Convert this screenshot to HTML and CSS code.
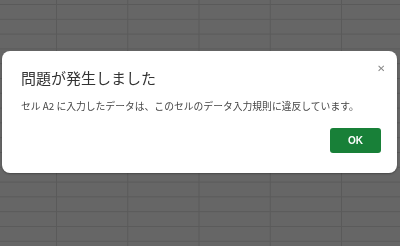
FILE: index.html
```html
<!DOCTYPE html>
<html>
  <head>
    <meta charset="UTF-8" />
    <title>問題が発生しました</title>
    <link rel="stylesheet" href="styles.css">
  </head>
  <body>
    <div class="sheet"></div>

    <div class="overlay">
      <div class="dialog">
        <div class="dialog-head">
          <h2 class="dialog-title">問題が発生しました</h2>
          <span class="close">&#x2715;</span>
        </div>
        <p class="dialog-text">セル A2 に入力したデータは、このセルのデータ入力規則に違反しています。</p>
        <div class="dialog-actions">
          <button class="ok-btn">OK</button>
        </div>
      </div>
    </div>
  </body>
</html>
```

FILE: styles.css
```css
html,
body {
  margin: 0;
  height: 100%;
}
body {
  font-family: "Noto Sans CJK JP", "Noto Sans", Arial, sans-serif;
  background-color: #666666;
  overflow: hidden;
}
.sheet {
  height: 100%;
  background-image:
    linear-gradient(to right, #5a5a5a 1px, transparent 1px),
    linear-gradient(to bottom, #5a5a5a 1px, transparent 1px);
  background-size: 71.25px 14.8px;
  background-position: 56px 4px;
}
.overlay {
  position: fixed;
  top: 0;
  left: 0;
  right: 0;
  bottom: 0;
}
.dialog {
  margin: 51px 3px 0 2px;
  height: 122px;
  box-sizing: border-box;
  background: #fff;
  border-radius: 8px;
  box-shadow: 0 1px 2px rgba(0, 0, 0, 0.3);
  padding: 16px 16px 0 19px;
}
.dialog-head {
  display: flex;
  justify-content: space-between;
  align-items: flex-start;
}
.dialog-title {
  margin: 0;
  font-size: 15px;
  font-weight: normal;
  color: #333;
  line-height: 22px;
}
.close {
  font-size: 10px;
  color: #888;
  margin-top: -7px;
  margin-right: -4px;
}
.dialog-text {
  margin: 10px 0 0;
  font-size: 9.8px;
  color: #444;
  line-height: 14px;
}
.dialog-actions {
  display: flex;
  justify-content: flex-end;
  margin-top: 15px;
}
.ok-btn {
  width: 51px;
  height: 25px;
  background: #188038;
  color: #fff;
  border: none;
  border-radius: 3px;
  font-family: "Liberation Sans", Arial, sans-serif;
  font-weight: bold;
  font-size: 10px;
}
```
